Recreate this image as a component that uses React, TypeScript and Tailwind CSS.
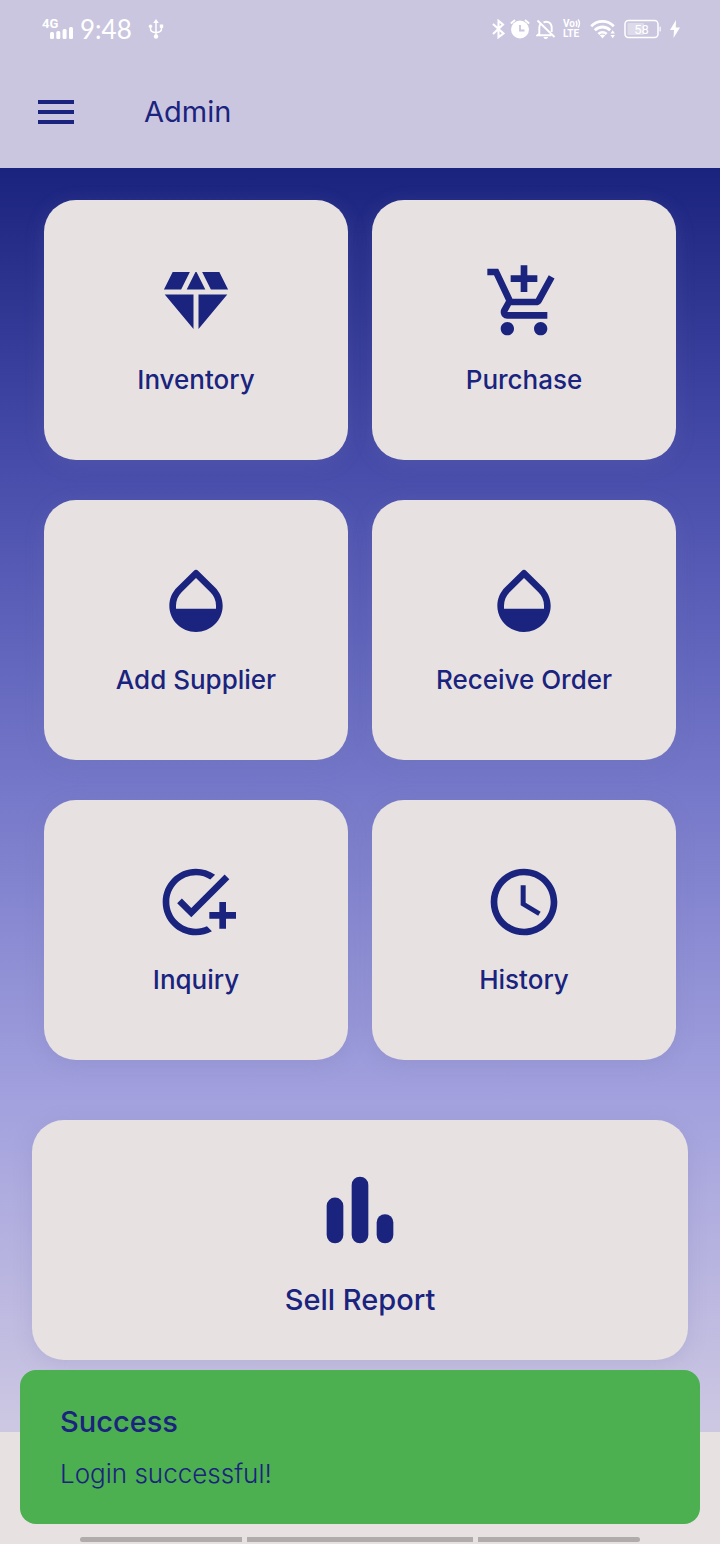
import type { ReactNode } from "react";
import {
  MdAccessTime,
  MdAddTask,
  MdDiamond,
  MdMenu,
  MdOutlineAddShoppingCart,
} from "react-icons/md";

function DropIcon() {
  return (
    <svg viewBox="0 0 24 24" className="size-20" fill="currentColor" aria-hidden="true">
      <path
        fillRule="evenodd"
        d="M6.35 7.56C4.9 8.99 4 10.96 4 13.13 4 17.48 7.58 21 12 21s8-3.52 8-7.87c0-2.17-.9-4.14-2.35-5.57L12.7 2.69a.996.996 0 0 0-1.4 0L6.35 7.56zM6 14v-.87c0-1.56.62-3.03 1.75-4.14L12 4.81l4.25 4.18A5.78 5.78 0 0 1 18 13.13V14z"
      />
    </svg>
  );
}

function BarsIcon() {
  return (
    <svg viewBox="0 0 24 24" className="size-[100px]" fill="currentColor" aria-hidden="true">
      <rect x="4" y="9" width="4" height="11" rx="2" />
      <rect x="10" y="4" width="4" height="16" rx="2" />
      <rect x="16" y="13" width="4" height="7" rx="2" />
    </svg>
  );
}

function SignalIcon() {
  return (
    <svg viewBox="0 0 34 24" className="h-6 w-[34px]" fill="currentColor" aria-label="4G signal">
      <text x="0" y="11" fontSize="13" fontWeight="700" fontFamily="Roboto, sans-serif">4G</text>
      <rect x="8" y="15" width="4" height="7" rx="1.5" />
      <rect x="14.3" y="14" width="4" height="8" rx="1.5" />
      <rect x="20.6" y="12" width="4" height="10" rx="1.5" />
      <rect x="27" y="10" width="4" height="12" rx="1.5" />
    </svg>
  );
}

function UsbIcon() {
  return (
    <svg viewBox="0 0 16 22" className="h-[22px] w-4" fill="none" stroke="currentColor" strokeWidth="1.5" aria-hidden="true">
      <path d="M8 4v14M2.5 8v2.5c0 2.5 2.5 4 5.5 4s5.5-1.5 5.5-4V8" />
      <path d="M8 1l2.8 4H5.2z" fill="currentColor" stroke="none" />
      <circle cx="8" cy="18.5" r="2.2" fill="currentColor" stroke="none" />
      <circle cx="2.5" cy="8.2" r="1.7" fill="currentColor" stroke="none" />
      <rect x="11.8" y="6.5" width="3.4" height="3.4" fill="currentColor" stroke="none" />
    </svg>
  );
}

function BluetoothIcon() {
  return (
    <svg viewBox="0 0 14 20" className="h-5 w-[14px]" fill="none" stroke="currentColor" strokeWidth="2.1" aria-hidden="true">
      <path d="M1 5l10.500 9.500L6.500 18.200V1.800l4.500 3.700L1 15" />
    </svg>
  );
}

function AlarmIcon() {
  return (
    <svg viewBox="0 0 20 20" className="size-5" aria-hidden="true">
      <circle cx="10" cy="10.5" r="9" fill="white" />
      <path d="M.8 4.500L5 1M19.200 4.500L15 1" stroke="white" strokeWidth="1.800" fill="none" />
      <path d="M10 6v5.500h4.500" stroke="#cbc6df" strokeWidth="1.800" fill="none" />
    </svg>
  );
}

function BellOffIcon() {
  return (
    <svg viewBox="0 0 20 20" className="size-5" fill="none" stroke="currentColor" strokeWidth="1.9" aria-hidden="true">
      <path d="M1.500 1.500l17 16.500M4.300 5.200C3.400 6.500 3.300 8 3.300 9.500v5.200L1.500 16.300h13.800M7.500 3.300C11.500 1.500 15.700 4 15.700 8.500V13" />
      <path d="M7.500 18h4.500c-.3 1.600-1.200 2-2.200 2s-2-.6-2.300-2z" fill="currentColor" stroke="none" />
    </svg>
  );
}

function VolteIcon() {
  return (
    <svg viewBox="0 0 20 22" className="h-[22px] w-5" fill="currentColor" aria-label="VoLTE">
      <text x="1" y="9" fontSize="10" fontWeight="700" fontFamily="Roboto, sans-serif">Vo</text>
      <path d="M14 3c1 1.500 1 4 0 5.500M16 1.500c1.800 2.200 1.800 5.500 0 8" stroke="currentColor" strokeWidth="1.4" fill="none" />
      <text x="1" y="19" fontSize="10" fontWeight="700" fontFamily="Roboto, sans-serif">LTE</text>
    </svg>
  );
}

function WifiIcon() {
  return (
    <svg viewBox="0 0 26 20" className="h-5 w-[26px]" fill="none" stroke="currentColor" strokeWidth="2.8" aria-hidden="true">
      <path d="M1.200 7.200c6.400-6.400 16.200-6.400 22.600 0M4.800 11.200c4.400-4.300 11-4.300 15.400 0M8.400 15c2.400-2.200 5.800-2.200 8.200 0" />
      <path d="M9.800 16.300c1.700-1.200 3.700-1.200 5.400 0L12.500 19.500zM20.500 14.500l2.200-3.200 2.200 3.200zM20.500 16h4.400l-2.200 3.200z" fill="currentColor" stroke="none" />
    </svg>
  );
}

function BatteryIcon() {
  return (
    <svg viewBox="0 0 38 20" className="h-5 w-[38px]" fill="currentColor" aria-label="Battery 58 percent">
      <rect x="1" y="1.500" width="33" height="17" rx="3.500" fill="none" stroke="currentColor" strokeWidth="1.5" />
      <rect x="3.500" y="4" width="16.500" height="12" rx="1" opacity=".35" />
      <rect x="35.500" y="7.500" width="1.200" height="5" rx=".5" />
      <text x="17.500" y="15" textAnchor="middle" fontSize="13" fontFamily="Roboto, sans-serif">58</text>
    </svg>
  );
}

function BoltIcon() {
  return (
    <svg viewBox="0 0 10 18" className="h-[18px] w-[10px]" fill="currentColor" aria-hidden="true">
      <path d="M6 0L0 10h4L3.500 18 10 7.500H5.800z" />
    </svg>
  );
}

function StatusBar() {
  return (
    <div className="flex h-14 items-center justify-between pt-[2px] pr-10 pl-[42px] text-white">
      <div className="flex items-center">
        <SignalIcon />
        <span className="ml-1 font-['Lato',sans-serif] text-[26px] leading-8">9:48</span>
        <span className="ml-4">
          <UsbIcon />
        </span>
      </div>
      <div className="flex items-center gap-[6px]">
        <div className="flex items-center gap-1">
          <BluetoothIcon />
          <AlarmIcon />
        </div>
        <BellOffIcon />
        <VolteIcon />
        <div className="flex items-center gap-2 pl-[2px]">
          <WifiIcon />
          <BatteryIcon />
          <BoltIcon />
        </div>
      </div>
    </div>
  );
}

const tiles: { label: string; icon: ReactNode }[] = [
  { label: "Inventory", icon: <MdDiamond className="size-20" /> },
  { label: "Purchase", icon: <MdOutlineAddShoppingCart className="size-20" /> },
  { label: "Add Supplier", icon: <DropIcon /> },
  { label: "Receive Order", icon: <DropIcon /> },
  { label: "Inquiry", icon: <MdAddTask className="size-20" /> },
  { label: "History", icon: <MdAccessTime className="size-20" /> },
];

export default function App() {
  return (
    <div className="relative flex min-h-screen flex-col bg-[#e7e2e1] font-['Inter',sans-serif] text-[#1a237e]">
      <header className="bg-[#cbc6df]">
        <StatusBar />
        <div className="flex h-28 items-center gap-16 px-8">
          <button type="button" aria-label="Open menu">
            <MdMenu className="size-12" />
          </button>
          <h1 className="text-[29px] leading-10 font-normal">Admin</h1>
        </div>
      </header>

      <main className="bg-[linear-gradient(180deg,#1a237e_0%,#484dab_24%,#7376c8_48%,#a3a1de_74%,#cdc8e2_100%)] px-8 pt-8 pb-[72px]">
        <div className="grid grid-cols-2 gap-x-6 gap-y-10 px-3">
          {tiles.map(({ label, icon }) => (
            <button
              key={label}
              type="button"
              className="flex h-[260px] flex-col items-center justify-center gap-5 rounded-[32px] bg-[#e7e2e1] shadow-[0_4px_20px_rgba(120,120,170,0.2)]"
            >
              {icon}
              <span className="text-[26px] leading-9 font-medium">{label}</span>
            </button>
          ))}
        </div>
        <button
          type="button"
          className="mt-[60px] flex h-60 w-full flex-col items-center justify-center gap-5 rounded-[32px] bg-[#e7e2e1] shadow-[0_4px_20px_rgba(120,120,170,0.2)]"
        >
          <BarsIcon />
          <span className="text-[29px] leading-10 font-medium">Sell Report</span>
        </button>
      </main>

      <div className="h-28" />

      <div
        role="status"
        className="absolute inset-x-5 bottom-5 flex flex-col gap-[14px] rounded-2xl bg-[#4caf50] px-10 py-8"
      >
        <p className="text-[29px] leading-10 font-medium">Success</p>
        <p className="text-[26px] leading-9 font-light">Login successful!</p>
      </div>

      <div className="absolute inset-x-20 bottom-[2px] flex gap-[5px]">
        <div className="h-[5px] flex-[162] rounded-l-full bg-[#b0acab]" />
        <div className="h-[5px] flex-[226] bg-[#b0acab]" />
        <div className="h-[5px] flex-[162] rounded-r-full bg-[#b0acab]" />
      </div>
    </div>
  );
}
